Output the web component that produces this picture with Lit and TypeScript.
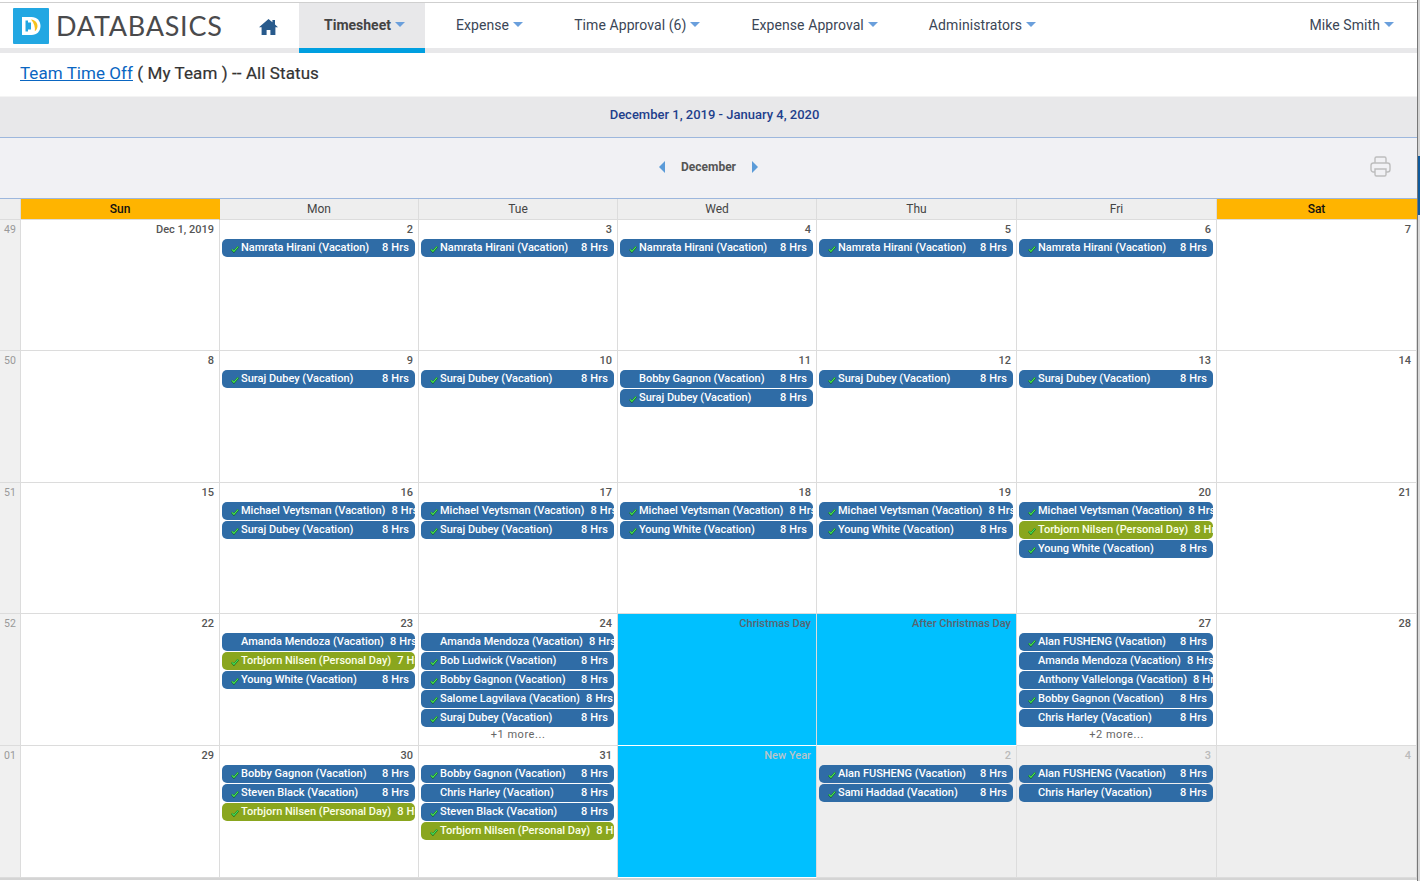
import { LitElement, html, css, svg } from "lit";
import { customElement } from "lit/decorators.js";

type Ev = { n: string; h?: string; c?: boolean; g?: boolean };
type Cell = { d: string; ev?: Ev[]; more?: string; hol?: string; out?: boolean };

const v = (n: string, c = true): Ev => ({ n: `${n} (Vacation)`, c });
const p = (h: string): Ev => ({ n: "Torbjorn Nilsen (Personal Day)", h, c: true, g: true });

const weeks: { w: string; cells: Cell[] }[] = [
  { w: "49", cells: [
    { d: "Dec 1, 2019" },
    { d: "2", ev: [v("Namrata Hirani")] },
    { d: "3", ev: [v("Namrata Hirani")] },
    { d: "4", ev: [v("Namrata Hirani")] },
    { d: "5", ev: [v("Namrata Hirani")] },
    { d: "6", ev: [v("Namrata Hirani")] },
    { d: "7" },
  ] },
  { w: "50", cells: [
    { d: "8" },
    { d: "9", ev: [v("Suraj Dubey")] },
    { d: "10", ev: [v("Suraj Dubey")] },
    { d: "11", ev: [v("Bobby Gagnon", false), v("Suraj Dubey")] },
    { d: "12", ev: [v("Suraj Dubey")] },
    { d: "13", ev: [v("Suraj Dubey")] },
    { d: "14" },
  ] },
  { w: "51", cells: [
    { d: "15" },
    { d: "16", ev: [v("Michael Veytsman"), v("Suraj Dubey")] },
    { d: "17", ev: [v("Michael Veytsman"), v("Suraj Dubey")] },
    { d: "18", ev: [v("Michael Veytsman"), v("Young White")] },
    { d: "19", ev: [v("Michael Veytsman"), v("Young White")] },
    { d: "20", ev: [v("Michael Veytsman"), p("8 Hrs"), v("Young White")] },
    { d: "21" },
  ] },
  { w: "52", cells: [
    { d: "22" },
    { d: "23", ev: [v("Amanda Mendoza", false), p("7 Hrs"), v("Young White")] },
    { d: "24", ev: [v("Amanda Mendoza", false), v("Bob Ludwick"), v("Bobby Gagnon"), v("Salome Lagvilava"), v("Suraj Dubey")], more: "+1 more..." },
    { d: "", hol: "Christmas Day" },
    { d: "", hol: "After Christmas Day" },
    { d: "27", ev: [v("Alan FUSHENG"), v("Amanda Mendoza", false), v("Anthony Vallelonga", false), v("Bobby Gagnon"), v("Chris Harley", false)], more: "+2 more..." },
    { d: "28" },
  ] },
  { w: "01", cells: [
    { d: "29" },
    { d: "30", ev: [v("Bobby Gagnon"), v("Steven Black"), p("8 Hrs")] },
    { d: "31", ev: [v("Bobby Gagnon"), v("Chris Harley", false), v("Steven Black"), p("8 Hrs")] },
    { d: "", hol: "New Year" },
    { d: "2", out: true, ev: [v("Alan FUSHENG"), v("Sami Haddad")] },
    { d: "3", out: true, ev: [v("Alan FUSHENG"), v("Chris Harley", false)] },
    { d: "4", out: true },
  ] },
];

const caret = html`<span class="caret"></span>`;
const check = svg`<svg class="chk" width="8" height="8" viewBox="0 0 8 8"><path d="M.8 4.4 2.9 6.6 7.2 1.6" fill="none" stroke="#0d5f24" stroke-width="2"/><path d="M.9 4.4 2.9 6.4 7.1 1.6" fill="none" stroke="#4be854" stroke-width="1.1"/></svg>`;

@customElement("app-root")
export class AppRoot extends LitElement {
  static styles = css`
    :host { display: block; width: 1420px; height: 881px; overflow: hidden; background: #fff; font-family: Roboto, "Liberation Sans", sans-serif; color: #333; }
    .frame { display: flex; height: 881px; }
    .main { width: 1417px; flex: none; display: flex; flex-direction: column; padding-top: 2px; box-sizing: border-box; }
    .gutter { width: 3px; flex: none; border-left: 1px solid #777; box-sizing: border-box; background: linear-gradient(#d4d4d4 0 156px, #0f5a9c 156px 215px, #d8d8d8 215px); }
    .top { height: 51px; flex: none; border-top: 1px solid #cfcfcf; border-bottom: 5px solid #e8e8ea; box-sizing: border-box; display: flex; align-items: stretch; }
    .brand { display: flex; align-items: center; width: 299px; flex: none; padding-left: 13px; box-sizing: border-box; }
    .logo { flex: none; }
    .brand-name { font: 400 27px Lato, sans-serif; color: #4a4a4c; margin-left: 7px; letter-spacing: .75px; width: 199px; flex: none; }
    .home { margin-left: 4px; margin-top: 2px; flex: none; }
    .tab { display: flex; align-items: center; font-size: 14px; letter-spacing: .08px; color: #3b4656; padding: 0 20px 2px 31px; white-space: nowrap; }
    .tab.on { position: relative; background: #e8e8ea; padding: 0 20px 2px 25px; font-weight: 700; color: #444; width: 126px; box-sizing: border-box; letter-spacing: 0; }
    .tab.on::after { content: ""; position: absolute; left: 0; right: 0; bottom: -5px; height: 5px; background: #009fe0; }
    .tab.user { margin-left: auto; padding: 0 23px 2px 0; }
    .caret { width: 0; height: 0; border-left: 5px solid transparent; border-right: 5px solid transparent; border-top: 5px solid #6a9fdc; margin-left: 4px; }
    .title { height: 44px; flex: none; box-sizing: border-box; padding: 10px 0 0 20px; font-size: 17px; letter-spacing: .09px; line-height: 21px; color: #333; border-bottom: 1px solid #f4f4f4; -webkit-text-stroke: .2px #333; }
    .title a { color: #0a66c2; letter-spacing: .05px; -webkit-text-stroke: 0; }
    .band { height: 41px; flex: none; box-sizing: border-box; background: #e8e8ea; border-bottom: 1px solid #9db7dd; display: flex; align-items: center; justify-content: center; padding: 0 0 5px 12px; font-size: 13px; font-weight: 500; color: #1f3f8c; }
    .month { height: 61px; flex: none; box-sizing: border-box; background: #f1f1f4; border-bottom: 1px solid #9db7dd; display: flex; align-items: center; position: relative; justify-content: center; gap: 15.5px; padding-bottom: 2px; font-size: 12px; font-weight: 700; color: #555; }
    .tri { width: 0; height: 0; border-top: 6px solid transparent; border-bottom: 6px solid transparent; }
    .tri.l { border-right: 6px solid #5b9bd8; }
    .tri.r { border-left: 6px solid #5b9bd8; }
    .print { position: absolute; left: 1370px; top: 18px; }
    .grid { display: grid; grid-template-columns: 21px 199px 199px 199px 199px 200px 200px 200px; grid-template-rows: 21px 131px 132px 131px 132px 132px; width: 1417px; flex: none; border-bottom: 2px solid #d4d4d4; }
    .hd { background: #eee; border-right: 1px solid #dcdcdc; border-bottom: 1px solid #dcdcdc; box-sizing: border-box; display: flex; align-items: center; justify-content: center; font-size: 12px; color: #444; }
    .hd.we { background: #ffb400; color: #111; font-weight: 500; border-right: 1px solid #ffb400; }
    .hd.blank { background: #eee; }
    .wk { background: #f0f0f0; font-size: 10.5px; color: #999; padding: 3px 0 0 4px; box-sizing: border-box; border-bottom: 1px solid #dcdcdc; border-right: 1px solid #dcdcdc; }
    .cell { border-right: 1px solid #dcdcdc; border-bottom: 1px solid #dcdcdc; box-sizing: border-box; padding: 2px 2px 0 2px; min-width: 0; overflow: hidden; }
    .cell.out { background: #eee; }
    .cell.hol { background: #00c0ff; border-right-color: #dcdcdc; border-bottom: 1px solid #fff; }
    .num { height: 17px; line-height: 16px; text-align: right; padding-right: 3px; font-size: 11px; font-weight: 500; color: #555; white-space: nowrap; }
    .out .num { color: #bbb; }
    .hol .num { color: #5a6470; }
    .hol.ny .num { color: #b9c4c9; }
    .ev { height: 18px; margin: 0 1px 1px 0; border-radius: 5px; background: #2f6ca6; color: #fff; font-size: 11px; font-weight: 500; line-height: 17px; display: flex; position: relative; overflow: hidden; padding: 0 6px 0 19px; white-space: nowrap; }
    .ev.g { background: #8aa61e; color: #fbffe6; }
    .ev .h { margin-left: auto; padding-left: 6px; flex: none; letter-spacing: .15px; }
    .ev .n { flex: none; }
    .chk { position: absolute; left: 9px; top: 6px; }
    .more { text-align: center; font-size: 11px; line-height: 14px; color: #666; letter-spacing: .55px; }
  `;

  cell(c: Cell) {
    const cls = `cell${c.out ? " out" : ""}${c.hol ? " hol" : ""}${c.hol === "New Year" ? " ny" : ""}`;
    return html`<div class=${cls}>
      <div class="num">${c.hol ?? c.d}</div>
      ${(c.ev ?? []).map(e => html`<div class="ev ${e.g ? "g" : ""}">${e.c ? check : ""}<span class="n">${e.n}</span><span class="h">${e.h ?? "8 Hrs"}</span></div>`)}
      ${c.more ? html`<div class="more">${c.more}</div>` : ""}
    </div>`;
  }

  render() {
    return html`<div class="frame"><div class="main">
      <div class="top">
        <div class="brand">
          <svg class="logo" width="36" height="36" viewBox="0 0 36 36">
            <rect width="36" height="36" rx="1" fill="#22a7e2"/>
            <path d="M9 9h9.500c5.500 0 9 3.900 9 9s-3.500 9-9 9H9z" fill="#fff"/>
            <path d="M12.500 12.500h5.500v11h-5.500z" fill="#22a7e2"/>
            <path d="M15 12h3c3.800 0 6.200 2.600 6.200 6s-2.400 6-6.200 6h-3v-2.600h3v-7h-3z" fill="#fff"/>
            <path d="M18 11.500c4.300.6 6.500 3.300 6.500 6.500 0 2-1 4-2.700 5.200 .6-3.900-.6-8-3.800-11.700z" fill="#f6c21c"/>
          </svg>
          <span class="brand-name">DATABASICS</span>
          <svg class="home" width="19" height="16" viewBox="0 0 19 16"><path d="M9.500 0 0 8.300h2.600V16h5v-5h3.800v5h5V8.300H19l-3-2.700V1h-2.600v2.300z" fill="#285a8c"/></svg>
        </div>
        <div class="tab on">Timesheet${caret}</div>
        <div class="tab">Expense${caret}</div>
        <div class="tab">Time Approval (6)${caret}</div>
        <div class="tab">Expense Approval${caret}</div>
        <div class="tab">Administrators${caret}</div>
        <div class="tab user">Mike Smith${caret}</div>
      </div>
      <div class="title"><a href="#">Team Time Off</a> ( My Team ) -- All Status</div>
      <div class="band">December 1, 2019 - January 4, 2020</div>
      <div class="month">
        <span class="tri l"></span><span>December</span><span class="tri r"></span>
        <svg class="print" width="21" height="21" viewBox="0 0 21 21" fill="none" stroke="#bdbdbd" stroke-width="1.4"><path d="M5 7V2.500A1.500 1.500 0 0 1 6.500 1h8A1.500 1.500 0 0 1 16 2.500V7"/><rect x="1" y="7" width="19" height="9" rx="2.500"/><path d="M5 13h11v5.500a1.500 1.500 0 0 1-1.500 1.500h-8A1.500 1.500 0 0 1 5 18.500z" fill="#f1f1f4"/></svg>
      </div>
      <div class="grid">
        <div class="hd blank"></div>
        ${["Sun", "Mon", "Tue", "Wed", "Thu", "Fri", "Sat"].map(d => html`<div class="hd ${d[0] === "S" ? "we" : ""}">${d}</div>`)}
        ${weeks.map(w => html`<div class="wk">${w.w}</div>${w.cells.map(c => this.cell(c))}`)}
      </div>
    </div><div class="gutter"></div></div>`;
  }
}
